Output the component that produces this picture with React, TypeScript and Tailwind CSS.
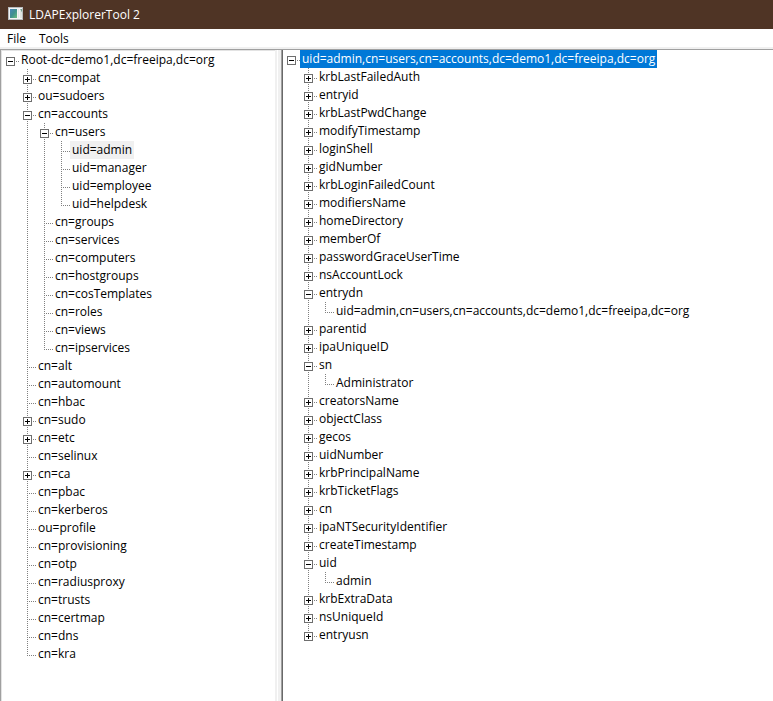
import { useState } from "react";

type TreeNode = {
  label: string;
  expandable?: boolean;
  open?: boolean;
  children?: TreeNode[];
};

type Highlight = "active" | "inactive" | "none";

const leaf = (label: string): TreeNode => ({ label });
const closed = (label: string): TreeNode => ({ label, expandable: true });
const opened = (label: string, children: TreeNode[]): TreeNode => ({
  label,
  expandable: true,
  open: true,
  children,
});

const directory = opened("Root-dc=demo1,dc=freeipa,dc=org", [
  closed("cn=compat"),
  closed("ou=sudoers"),
  opened("cn=accounts", [
    opened("cn=users", [
      leaf("uid=admin"),
      leaf("uid=manager"),
      leaf("uid=employee"),
      leaf("uid=helpdesk"),
    ]),
    leaf("cn=groups"),
    leaf("cn=services"),
    leaf("cn=computers"),
    leaf("cn=hostgroups"),
    leaf("cn=cosTemplates"),
    leaf("cn=roles"),
    leaf("cn=views"),
    leaf("cn=ipservices"),
  ]),
  leaf("cn=alt"),
  leaf("cn=automount"),
  leaf("cn=hbac"),
  closed("cn=sudo"),
  closed("cn=etc"),
  leaf("cn=selinux"),
  closed("cn=ca"),
  leaf("cn=pbac"),
  leaf("cn=kerberos"),
  leaf("ou=profile"),
  leaf("cn=provisioning"),
  leaf("cn=otp"),
  leaf("cn=radiusproxy"),
  leaf("cn=trusts"),
  leaf("cn=certmap"),
  leaf("cn=dns"),
  leaf("cn=kra"),
]);

const entryDn = "uid=admin,cn=users,cn=accounts,dc=demo1,dc=freeipa,dc=org";

const entry = opened(entryDn, [
  closed("krbLastFailedAuth"),
  closed("entryid"),
  closed("krbLastPwdChange"),
  closed("modifyTimestamp"),
  closed("loginShell"),
  closed("gidNumber"),
  closed("krbLoginFailedCount"),
  closed("modifiersName"),
  closed("homeDirectory"),
  closed("memberOf"),
  closed("passwordGraceUserTime"),
  closed("nsAccountLock"),
  opened("entrydn", [leaf(entryDn)]),
  closed("parentid"),
  closed("ipaUniqueID"),
  opened("sn", [leaf("Administrator")]),
  closed("creatorsName"),
  closed("objectClass"),
  closed("gecos"),
  closed("uidNumber"),
  closed("krbPrincipalName"),
  closed("krbTicketFlags"),
  closed("cn"),
  closed("ipaNTSecurityIdentifier"),
  closed("createTimestamp"),
  opened("uid", [leaf("admin")]),
  closed("krbExtraData"),
  closed("nsUniqueId"),
  closed("entryusn"),
]);

const vertical =
  "absolute left-2 top-0 w-px bg-[repeating-linear-gradient(to_bottom,#808080_0px,#808080_1px,transparent_1px,transparent_2px)]";
const horizontal =
  "absolute left-2 top-2.5 h-px w-[9px] bg-[repeating-linear-gradient(to_right,#808080_0px,#808080_1px,transparent_1px,transparent_2px)]";

const highlights: Record<Highlight, string> = {
  active: "bg-[#0078d7] text-white",
  inactive: "bg-[#f0f0f0]",
  none: "",
};

function Expander({ open, label, onToggle }: { open: boolean; label: string; onToggle: () => void }) {
  return (
    <button
      type="button"
      aria-label={(open ? "Collapse " : "Expand ") + label}
      onClick={onToggle}
      className="absolute left-1 top-1.5 size-[9px] bg-white"
    >
      <svg viewBox="0 0 9 9" className="block size-[9px]" shapeRendering="crispEdges" aria-hidden="true">
        <rect x="0.5" y="0.5" width="8" height="8" fill="#fff" stroke="#6e6e6e" />
        <rect x="2" y="4" width="5" height="1" fill="#000" />
        {!open && <rect x="4" y="2" width="1" height="5" fill="#000" />}
      </svg>
    </button>
  );
}

function TreeItem({
  node,
  guides,
  root = false,
  last,
  selected,
  highlight,
}: {
  node: TreeNode;
  guides: boolean[];
  root?: boolean;
  last: boolean;
  selected: string;
  highlight: Highlight;
}) {
  const [open, setOpen] = useState(Boolean(node.open));
  const isSelected = highlight !== "none" && node.label === selected;
  const childGuides = root ? [false] : [...guides, !last];
  return (
    <li role="treeitem" aria-expanded={node.expandable ? open : undefined} aria-selected={isSelected}>
      <div className="flex h-[18px]">
        {guides.map((line, i) => (
          <span key={i} className="relative w-[17px] shrink-0">
            {line && <span className={`${vertical} h-full`} />}
          </span>
        ))}
        <span className="relative w-[17px] shrink-0">
          {!root && <span className={`${vertical} ${last ? "h-2.5" : "h-full"}`} />}
          <span className={horizontal} />
          {node.expandable && <Expander open={open} label={node.label} onToggle={() => setOpen(!open)} />}
        </span>
        <span className={`px-0.5 leading-[18px] whitespace-nowrap ${isSelected ? highlights[highlight] : ""}`}>
          {node.label}
        </span>
      </div>
      {open && node.children && (
        <ul role="group">
          {node.children.map((child, i) => (
            <TreeItem
              key={child.label}
              node={child}
              guides={childGuides}
              last={i === node.children!.length - 1}
              selected={selected}
              highlight={highlight === "inactive" ? "inactive" : "none"}
            />
          ))}
        </ul>
      )}
    </li>
  );
}

function Tree({ name, root, selected, highlight }: { name: string; root: TreeNode; selected: string; highlight: Highlight }) {
  return (
    <ul role="tree" aria-label={name}>
      <TreeItem node={root} guides={[]} root last selected={selected} highlight={highlight} />
    </ul>
  );
}

function AppIcon() {
  return (
    <svg viewBox="0 0 15 13" className="mb-0.5 h-[13px] w-[15px]" aria-hidden="true">
      <defs>
        <linearGradient id="screen" x1="0" y1="0" x2="1" y2="1">
          <stop offset="0" stopColor="#4a86b8" />
          <stop offset="0.5" stopColor="#3f8f8f" />
          <stop offset="1" stopColor="#6cbf7c" />
        </linearGradient>
      </defs>
      <rect x="0" y="0" width="15" height="13" fill="#b9bcbe" />
      <rect x="1" y="1" width="13" height="11" fill="#f4f4f4" />
      <rect x="2" y="2" width="7" height="9" fill="url(#screen)" />
      <rect x="10" y="2" width="1" height="9" fill="#e2e6ea" />
      <path d="M12 2h2v4z" fill="#6fa08c" />
      <path d="M12 2v9h2V6z" fill="#dfe5e2" />
    </svg>
  );
}

export default function App() {
  return (
    <div className="flex min-h-screen flex-col bg-white font-['Open_Sans','Noto_Sans',sans-serif] text-[12px] text-black">
      <header className="flex h-[29px] items-center gap-1.5 bg-[#4f3425] pl-2 text-white">
        <AppIcon />
        <h1>LDAPExplorerTool 2</h1>
      </header>
      <nav className="flex h-[18px] items-center gap-[13px] pt-0.5 pl-[7px]">
        <button type="button">File</button>
        <button type="button">Tools</button>
      </nav>
      <main className="flex grow border-t-2 border-[#f0f0f0]">
        <section className="flex w-[281px] shrink-0 bg-[#f0f0f0]">
          <div className="grow border-t border-l border-[#a0a0a0]">
            <div className="h-full border-t border-l border-[#e3e3e3] bg-white">
              <Tree name="Directory" root={directory} selected="uid=admin" highlight="inactive" />
            </div>
          </div>
          <div className="w-1.5 border-t border-t-[#a0a0a0]">
            <div className="ml-0.5 h-full w-px bg-white" />
          </div>
        </section>
        <section className="grow border-t border-l border-[#a0a0a0]">
          <div className="h-full border-l border-[#696969] bg-white">
            <Tree name="Entry attributes" root={entry} selected={entryDn} highlight="active" />
          </div>
        </section>
      </main>
    </div>
  );
}
